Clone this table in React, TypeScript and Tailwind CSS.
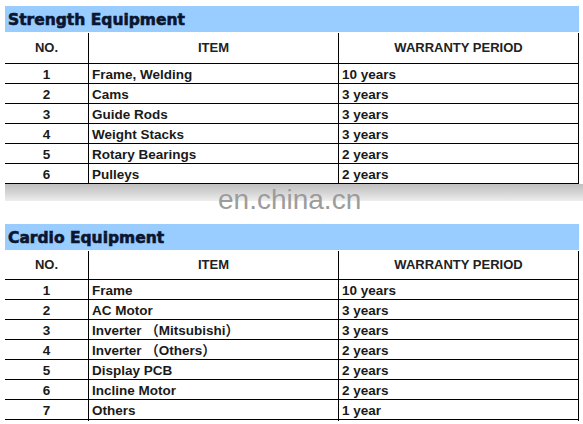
type Row = { no: number; item: string; period: string };

const strength: Row[] = [
  { no: 1, item: "Frame, Welding", period: "10 years" },
  { no: 2, item: "Cams", period: "3 years" },
  { no: 3, item: "Guide Rods", period: "3 years" },
  { no: 4, item: "Weight Stacks", period: "3 years" },
  { no: 5, item: "Rotary Bearings", period: "2 years" },
  { no: 6, item: "Pulleys", period: "2 years" },
];

const cardio: Row[] = [
  { no: 1, item: "Frame", period: "10 years" },
  { no: 2, item: "AC Motor", period: "3 years" },
  { no: 3, item: "Inverter （Mitsubishi）", period: "3 years" },
  { no: 4, item: "Inverter （Others）", period: "2 years" },
  { no: 5, item: "Display PCB", period: "2 years" },
  { no: 6, item: "Incline Motor", period: "2 years" },
  { no: 7, item: "Others", period: "1 year" },
];

function WarrantyTable({
  title,
  rows,
  headerHeight,
}: {
  title: string;
  rows: Row[];
  headerHeight: string;
}) {
  return (
    <div className="w-[574px]">
      {/* Title bar */}
      <div className="h-[26px] bg-[#99ccff] flex items-center pl-[3px] pt-[3px]">
        <span className="font-['DejaVu_Sans',sans-serif] font-bold text-[15.5px] text-[#0b1530] leading-none [-webkit-text-stroke:0.6px_#0b1530]">
          {title}
        </span>
      </div>

      {/* Header */}
      <div
        className={`grid grid-cols-[84px_250px_240px] border-b border-black ${headerHeight} text-[13px] font-bold text-[#222] pt-[1px]`}
      >
        <div className="flex items-center justify-center border-r border-black">
          NO.
        </div>
        <div className="flex items-center justify-center border-r border-black">
          ITEM
        </div>
        <div className="flex items-center justify-center border-r border-black">
          WARRANTY PERIOD
        </div>
      </div>

      {/* Rows */}
      {rows.map((r) => (
        <div
          key={r.no}
          className="grid grid-cols-[84px_250px_240px] h-[20px] border-b border-black text-[13.5px] font-bold text-[#1a1a1a]"
        >
          <div className="flex items-center justify-center border-r border-black pt-[1px]">
            {r.no}
          </div>
          <div className="flex items-center pl-[3px] border-r border-black whitespace-nowrap pt-[1px]">
            {r.item}
          </div>
          <div className="flex items-center pl-[3px] border-r border-black pt-[1px]">
            {r.period}
          </div>
        </div>
      ))}
    </div>
  );
}

export default function App() {
  return (
    <div className="w-[583px] h-[424px] bg-white font-['Liberation_Sans','Noto_Sans_CJK_SC',sans-serif] overflow-hidden">
      <div className="pl-[5px] pt-[6px]">
        <WarrantyTable
          title="Strength Equipment"
          rows={strength}
          headerHeight="h-[32px]"
        />
      </div>

      {/* Watermark band */}
      <div className="relative h-[40px]">
        <div className="h-[17px] ml-[5px] w-[578px] bg-gradient-to-b from-[#bfbfbf] via-[#d4d4d4] to-[#eeeeee]" />
        <span className="absolute left-[218px] top-[2px] text-[28px] leading-[28px] text-[#9c9c9c] font-['Liberation_Sans',sans-serif]">
          en.china.cn
        </span>
      </div>

      <div className="pl-[5px]">
        <WarrantyTable
          title="Cardio Equipment"
          rows={cardio}
          headerHeight="h-[30px]"
        />
      </div>
    </div>
  );
}
